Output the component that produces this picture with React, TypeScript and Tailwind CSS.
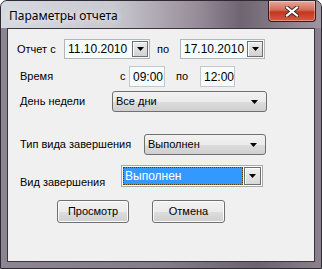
import React from 'react';

function Arrow() {
  return (
    <svg width="7" height="4" viewBox="0 0 7 4" className="block">
      <path d="M0 0H7L3.5 4Z" fill="#000" />
    </svg>
  );
}

function DateBox({ value, className }: { value: string; className: string }) {
  return (
    <div
      className={`flex h-[20px] items-center justify-between border border-[#b2b6bc] bg-[#f6fbfb] pl-[3px] pr-[1px] ${className}`}
    >
      <span>{value}</span>
      <div className="flex h-[16px] w-[16px] items-center justify-center border border-[#6f6f6f] bg-[linear-gradient(#ececec,#d2d2d2)] shadow-[inset_1px_1px_0_#fff]">
        <Arrow />
      </div>
    </div>
  );
}

function TimeBox({ value, className }: { value: string; className: string }) {
  return (
    <div
      className={`flex h-[21px] items-center border border-[#c4c8cc] bg-[#f6fbfb] pl-[3px] ${className}`}
    >
      {value}
    </div>
  );
}

function Combo({ value, className }: { value: string; className: string }) {
  return (
    <div
      className={`flex h-[21px] items-center justify-between rounded-[3px] border border-[#707070] bg-[linear-gradient(#f2f2f2_0%,#ebebeb_50%,#dddddd_51%,#cfcfcf_100%)] pl-[3px] pr-[8px] ${className}`}
    >
      <span>{value}</span>
      <Arrow />
    </div>
  );
}

function WinButton({ label, className }: { label: string; className: string }) {
  return (
    <button
      className={`flex h-[23px] items-center justify-center rounded-[3px] border border-[#707070] bg-[linear-gradient(#f2f2f2_0%,#ebebeb_50%,#dddddd_51%,#cfcfcf_100%)] shadow-[inset_0_0_0_1px_#fcfcfc] ${className}`}
    >
      {label}
    </button>
  );
}

export default function App() {
  return (
    <div className="h-[269px] w-[322px] bg-white">
      <div className="flex h-[269px] w-[322px] flex-col rounded-t-[7px] border border-[#2e2a33] bg-[linear-gradient(90deg,#8c8592_0%,#857d89_50%,#6c6270_80%,#8a818c_100%)] [font-family:'Liberation_Sans',Arial,sans-serif]">
        <div className="flex h-[27px] items-start justify-between rounded-t-[6px] bg-[linear-gradient(90deg,#d6dae0_0%,#c9c9d0_35%,#958b98_62%,#6f6572_75%,#9e95a0_100%)]">
          <span className="ml-[8px] mt-[6px] text-[12px] text-black [font-family:'Noto_Sans',sans-serif] [text-shadow:0_0_6px_#fff]">
            Параметры отчета
          </span>
          <div className="mr-[5px] flex h-[21px] w-[48px] items-center justify-center rounded-b-[4px] border border-t-0 border-[#3a1a16] bg-[linear-gradient(#e8a89c_0%,#d36b57_45%,#c3361e_55%,#d55a42_100%)] shadow-[inset_0_0_0_1px_rgba(255,255,255,0.35)]">
            <svg width="14" height="11" viewBox="0 0 14 11">
              <path
                d="M2 1.5L12 9.5M12 1.5L2 9.5"
                stroke="#3a2522"
                strokeWidth="4"
                strokeLinecap="square"
              />
              <path
                d="M2 1.5L12 9.5M12 1.5L2 9.5"
                stroke="#fff"
                strokeWidth="2.2"
                strokeLinecap="square"
              />
            </svg>
          </div>
        </div>
        <div className="mx-[6px] h-[234px] border border-[#3b3540] bg-[#f0f0f0] text-[11px] text-black">
          <div className="mt-[10px] flex h-[20px] items-center">
            <span className="w-[56px] pl-[9px]">Отчет с</span>
            <DateBox value="11.10.2010" className="w-[86px] text-[12px]" />
            <span className="w-[30px] pl-[7px]">по</span>
            <DateBox value="17.10.2010" className="w-[85px] text-[12px]" />
          </div>
          <div className="mt-[7px] flex h-[21px] items-center">
            <span className="w-[112px] pl-[12px]">Время</span>
            <span className="w-[9px]">с</span>
            <TimeBox value="09:00" className="w-[36px] text-[12px]" />
            <span className="w-[35px] pl-[11px]">по</span>
            <TimeBox value="12:00" className="w-[35px] text-[12px]" />
          </div>
          <div className="mt-[4px] flex h-[21px] items-center">
            <span className="w-[104px] pl-[12px]">День недели</span>
            <Combo value="Все дни" className="w-[155px]" />
          </div>
          <div className="mt-[22px] flex h-[21px] items-center">
            <span className="w-[136px] pl-[12px]">Тип вида завершения</span>
            <Combo value="Выполнен" className="w-[122px]" />
          </div>
          <div className="mt-[10px] flex h-[22px]">
            <span className="mt-[9px] w-[113px] pl-[12px]">Вид завершения</span>
            <div className="flex h-[22px] w-[142px] items-center border border-[#a9a9a9] bg-white p-[1px]">
              <div className="flex h-[18px] flex-1 items-center border border-dotted border-[#5a3b10] bg-[#3399ff] pl-[1px] text-[12px] text-white">
                Выполнен
              </div>
              <div className="ml-[1px] flex h-[18px] w-[17px] items-center justify-center border border-[#6f6f6f] bg-[linear-gradient(#f0f0f0,#d8d8d8)] shadow-[inset_1px_1px_0_#fff]">
                <Arrow />
              </div>
            </div>
          </div>
          <div className="mt-[13px] flex">
            <WinButton label="Просмотр" className="ml-[49px] w-[72px]" />
            <WinButton label="Отмена" className="ml-[23px] w-[73px]" />
          </div>
        </div>
      </div>
    </div>
  );
}
